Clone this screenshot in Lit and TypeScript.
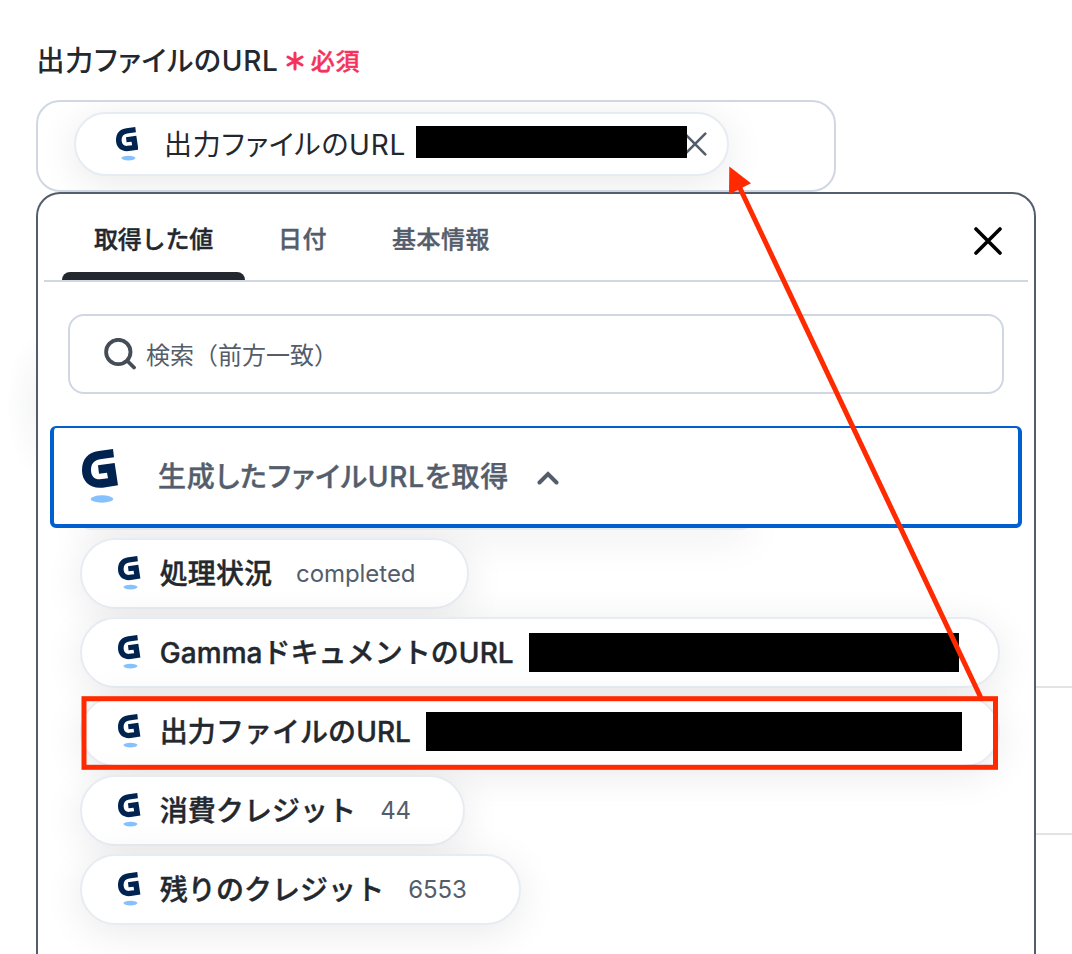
import { LitElement, html, css, svg, nothing } from 'lit';
import { customElement, property } from 'lit/decorators.js';
import { classMap } from 'lit/directives/class-map.js';
import { styleMap } from 'lit/directives/style-map.js';

interface OutputItem {
  name: string;
  value?: string;
  masked?: number;
}

const ITEMS: OutputItem[] = [
  { name: '処理状況', value: 'completed' },
  { name: 'GammaドキュメントのURL', masked: 430 },
  { name: '出力ファイルのURL', masked: 536 },
  { name: '消費クレジット', value: '44' },
  { name: '残りのクレジット', value: '6553' },
];

const TABS = ['取得した値', '日付', '基本情報'];

const cross = svg`<path d="M2 2L26 26M26 2L2 26" />`;

@customElement('app-logo')
class AppLogo extends LitElement {
  static get styles() {
    return css`
      :host {
        display: block;
        flex: none;
        width: 22.4px;
        height: 33.6px;
      }
      svg {
        display: block;
        width: 100%;
        height: 100%;
      }
    `;
  }

  render() {
    return html`
      <svg viewBox="0 0 108 162">
        <path
          fill="#002350"
          d="M93 0L96 25L54 31C36 34 27 45 27 62C27 82 38 92 54 91L78 88L75 71L51 74L48 49L98 42L108 109L62 116C25 120 0 98 0 64C0 30 18 10 50 6Z"
        />
        <ellipse cx="60" cy="150" rx="34" ry="11" fill="#86c1ff" />
      </svg>
    `;
  }
}

@customElement('output-item')
class OutputItemChip extends LitElement {
  @property() name = '';
  @property() value = '';
  @property({ type: Number }) masked = 0;

  static get styles() {
    return css`
      :host {
        display: flex;
        box-sizing: border-box;
        height: 71px;
        align-items: center;
        padding: 0 52px 0 36.4px;
        border: 2px solid #e7ebf2;
        border-radius: 36px;
        background: #fff;
        box-shadow: 0 7px 40px rgba(0, 0, 0, 0.09);
      }
      :host([masked]) {
        width: 920px;
        padding-right: 0;
      }
      app-logo {
        margin-right: 19px;
        margin-top: -1px;
      }
      .name {
        margin-top: -3px;
        font-size: 28px;
        font-weight: 500;
        letter-spacing: 0.05px;
        color: #23282f;
        -webkit-text-stroke: 0.4px #23282f;
        white-space: nowrap;
      }
      .value {
        margin-left: 24px;
        font-size: 24px;
        letter-spacing: -0.05px;
        color: #545d6b;
      }
      .mask {
        height: 39px;
        margin-left: 15.4px;
        background: #000;
      }
    `;
  }

  render() {
    return html`
      <app-logo></app-logo>
      <span class="name">${this.name}</span>
      ${this.masked
        ? html`<span class="mask" style=${styleMap({ width: `${this.masked}px` })}></span>`
        : html`<span class="value">${this.value}</span>`}
    `;
  }
}

@customElement('app-root')
class AppRoot extends LitElement {
  static get styles() {
    return [
      css`
        :host {
          display: block;
          position: relative;
          box-sizing: border-box;
          width: 1072px;
          height: 954px;
          padding-left: 36px;
          overflow: hidden;
          background: #fff;
          color: #23282f;
          font-family: Inter, 'Noto Sans CJK JP', sans-serif;
        }
        svg {
          display: block;
          fill: none;
          stroke-linecap: round;
          flex: none;
        }
        .label {
          display: flex;
          align-items: center;
          height: 100px;
          box-sizing: border-box;
          padding: 18px 0 0 0.5px;
          font-size: 28px;
          font-weight: 500;
          letter-spacing: 0.75px;
          font-feature-settings: 'palt';
          white-space: nowrap;
        }
        .required {
          display: flex;
          align-items: center;
          gap: 7px;
          margin-left: 7px;
          font-size: 24px;
          color: #f5325b;
          -webkit-text-stroke: 0.4px #f5325b;
          font-feature-settings: normal;
        }
        .required svg {
          margin-top: 4px;
        }
        .field {
          display: flex;
          box-sizing: border-box;
          width: 800px;
          height: 92px;
          padding: 10px 36px;
          border: 2px solid #d0d7e2;
          border-radius: 24px;
          overflow: hidden;
        }
        .selected {
          display: flex;
          align-items: center;
          box-sizing: border-box;
          width: 655px;
          height: 64px;
          padding-left: 40px;
          border: 2px solid #e7ebf2;
          border-radius: 32px;
          background: #fff;
          box-shadow: 0 7px 40px rgba(0, 0, 0, 0.09);
        }
        .selected .text {
          flex: none;
          margin: -3px 0 0 25.5px;
          width: 252px;
          font-size: 28px;
          letter-spacing: 0.75px;
          font-feature-settings: 'palt';
          white-space: nowrap;
        }
        .selected .mask {
          flex: none;
          width: 271px;
          height: 32px;
          margin-top: -5px;
          background: #000;
          z-index: 1;
        }
        .selected svg {
          margin-left: -4px;
          stroke: #545d6b;
          stroke-width: 3;
        }
        .body {
          display: flex;
        }
        .panel {
          position: relative;
          box-sizing: border-box;
          width: 1000px;
          height: 790px;
          padding: 0 6px;
          border: 2px solid #545d6b;
          border-bottom: 0;
          border-radius: 24px 24px 0 0;
          background: #fff;
        }
        .side {
          flex: 1;
        }
        .side div {
          box-sizing: border-box;
          height: 147px;
          border-bottom: 2px solid #e3e3e3;
        }
        .side div:first-child {
          height: 496px;
        }
        .glow {
          position: absolute;
          left: 6px;
          top: 330px;
          width: 72px;
          height: 150px;
          background: radial-gradient(closest-side, rgba(20, 45, 35, 0.05), transparent);
        }
        .tabs {
          display: flex;
          box-sizing: border-box;
          height: 88px;
          padding-left: 18px;
          border-bottom: 2px solid #d0d7e2;
          font-size: 24px;
          font-weight: 500;
        }
        .tab {
          box-sizing: border-box;
          height: 86px;
          padding: 26px 32px 0 33px;
          line-height: 40px;
          letter-spacing: 0.5px;
          color: #545d6b;
          -webkit-text-stroke: 0.4px #545d6b;
          border-bottom: 8px solid transparent;
          white-space: nowrap;
        }
        .active {
          display: flex;
          flex-direction: column;
          width: 183px;
          padding: 26px 32px 0;
          border-bottom: 0;
          letter-spacing: -0.2px;
          color: #23282f;
          -webkit-text-stroke-color: #23282f;
        }
        .active::after {
          content: '';
          height: 8px;
          margin: auto -32px 0;
          border-radius: 8px 8px 0 0;
          background: #23282f;
        }
        .close {
          margin: 33px 26px 0 auto;
          stroke: #000;
          stroke-width: 3.6;
        }
        .search {
          display: flex;
          align-items: center;
          box-sizing: border-box;
          height: 80px;
          margin: 32px 24px;
          padding: 0 0 2px 34px;
          border: 2px solid #d0d7e2;
          border-radius: 16px;
          font-size: 24px;
          color: #545d6b;
        }
        .search svg {
          margin: 2px 10px 0 0;
          stroke: #444c55;
          stroke-width: 3.8;
        }
        .group {
          position: relative;
          z-index: 1;
          display: flex;
          align-items: center;
          box-sizing: border-box;
          height: 102px;
          margin: 0 6px;
          padding-left: 28px;
          border: 4px solid #0060d0;
          border-top-width: 2px;
          border-radius: 6px;
          background: #fff;
          font-size: 28px;
          font-weight: 500;
          color: #545d6b;
        }
        .group app-logo {
          width: 36px;
          height: 54px;
        }
        .group .text {
          margin: -3px 27.5px 0 40px;
          letter-spacing: 0.8px;
          font-feature-settings: 'palt';
          -webkit-text-stroke: 0.4px #545d6b;
        }
        .group svg {
          stroke: #545d6b;
          stroke-width: 4;
          margin-top: 3px;
        }
        .shade {
          width: 672px;
          height: 20px;
          margin: -18px 0 0 36px;
          border-radius: 10px;
          border-bottom: 2px solid #e7ebf2;
          box-sizing: border-box;
          box-shadow: 0 7px 40px rgba(0, 0, 0, 0.09);
        }
        .items {
          display: flex;
          flex-direction: column;
          align-items: flex-start;
          gap: 8px;
          padding: 8px 0 0 36px;
        }
        .overlay {
          position: absolute;
          left: 0;
          top: 0;
          z-index: 2;
        }
      `,
    ];
  }

  render() {
    return html`
      <div class="glow"></div>
      <div class="label">
        <span>出力ファイルのURL</span>
        <span class="required">
          <svg width="18" height="20" viewBox="0 0 18 20" stroke="#f5325b" stroke-width="3">
            <path d="M9 2V18M2 6L16 14M16 6L2 14" />
          </svg>
          必須
        </span>
      </div>
      <div class="field">
        <div class="selected">
          <app-logo></app-logo>
          <span class="text">出力ファイルのURL</span>
          <span class="mask"></span>
          <svg width="24" height="24" viewBox="0 0 28 28">${cross}</svg>
        </div>
      </div>
      <div class="body">
        <div class="panel">
          <div class="tabs">
            ${TABS.map(
              (tab, i) => html`<div class=${classMap({ tab: true, active: i === 0 })}>${tab}</div>`,
            )}
            <svg class="close" width="28" height="28" viewBox="0 0 28 28">${cross}</svg>
          </div>
          <div class="search">
            <svg width="32" height="32" viewBox="0 0 32 32">
              <circle cx="14.3" cy="14" r="12.2" />
              <path d="M23.5 23L30 29.5" />
            </svg>
            検索（前方一致）
          </div>
          <div class="group">
            <app-logo></app-logo>
            <span class="text">生成したファイルURLを取得</span>
            <svg width="22" height="14" viewBox="0 0 22 14">
              <path d="M2.5 11.5L11 3L19.5 11.5" />
            </svg>
          </div>
          <div class="shade"></div>
          <div class="items">
            ${ITEMS.map(
              item => html`
                <output-item
                  .name=${item.name}
                  .value=${item.value ?? ''}
                  masked=${item.masked ?? nothing}
                ></output-item>
              `,
            )}
          </div>
        </div>
        <div class="side">
          <div></div>
          <div></div>
        </div>
      </div>
      <svg class="overlay" width="1072" height="954" viewBox="0 0 1072 954">
        <rect x="84" y="698.7" width="911.5" height="68.6" stroke="#ff2a00" stroke-width="5" />
        <path d="M738 184L981 698" stroke="#ff2a00" stroke-width="5" stroke-linecap="butt" />
        <path d="M729.3 166.5L751 183.3L729 194.5Z" fill="#ff2a00" />
      </svg>
    `;
  }
}
